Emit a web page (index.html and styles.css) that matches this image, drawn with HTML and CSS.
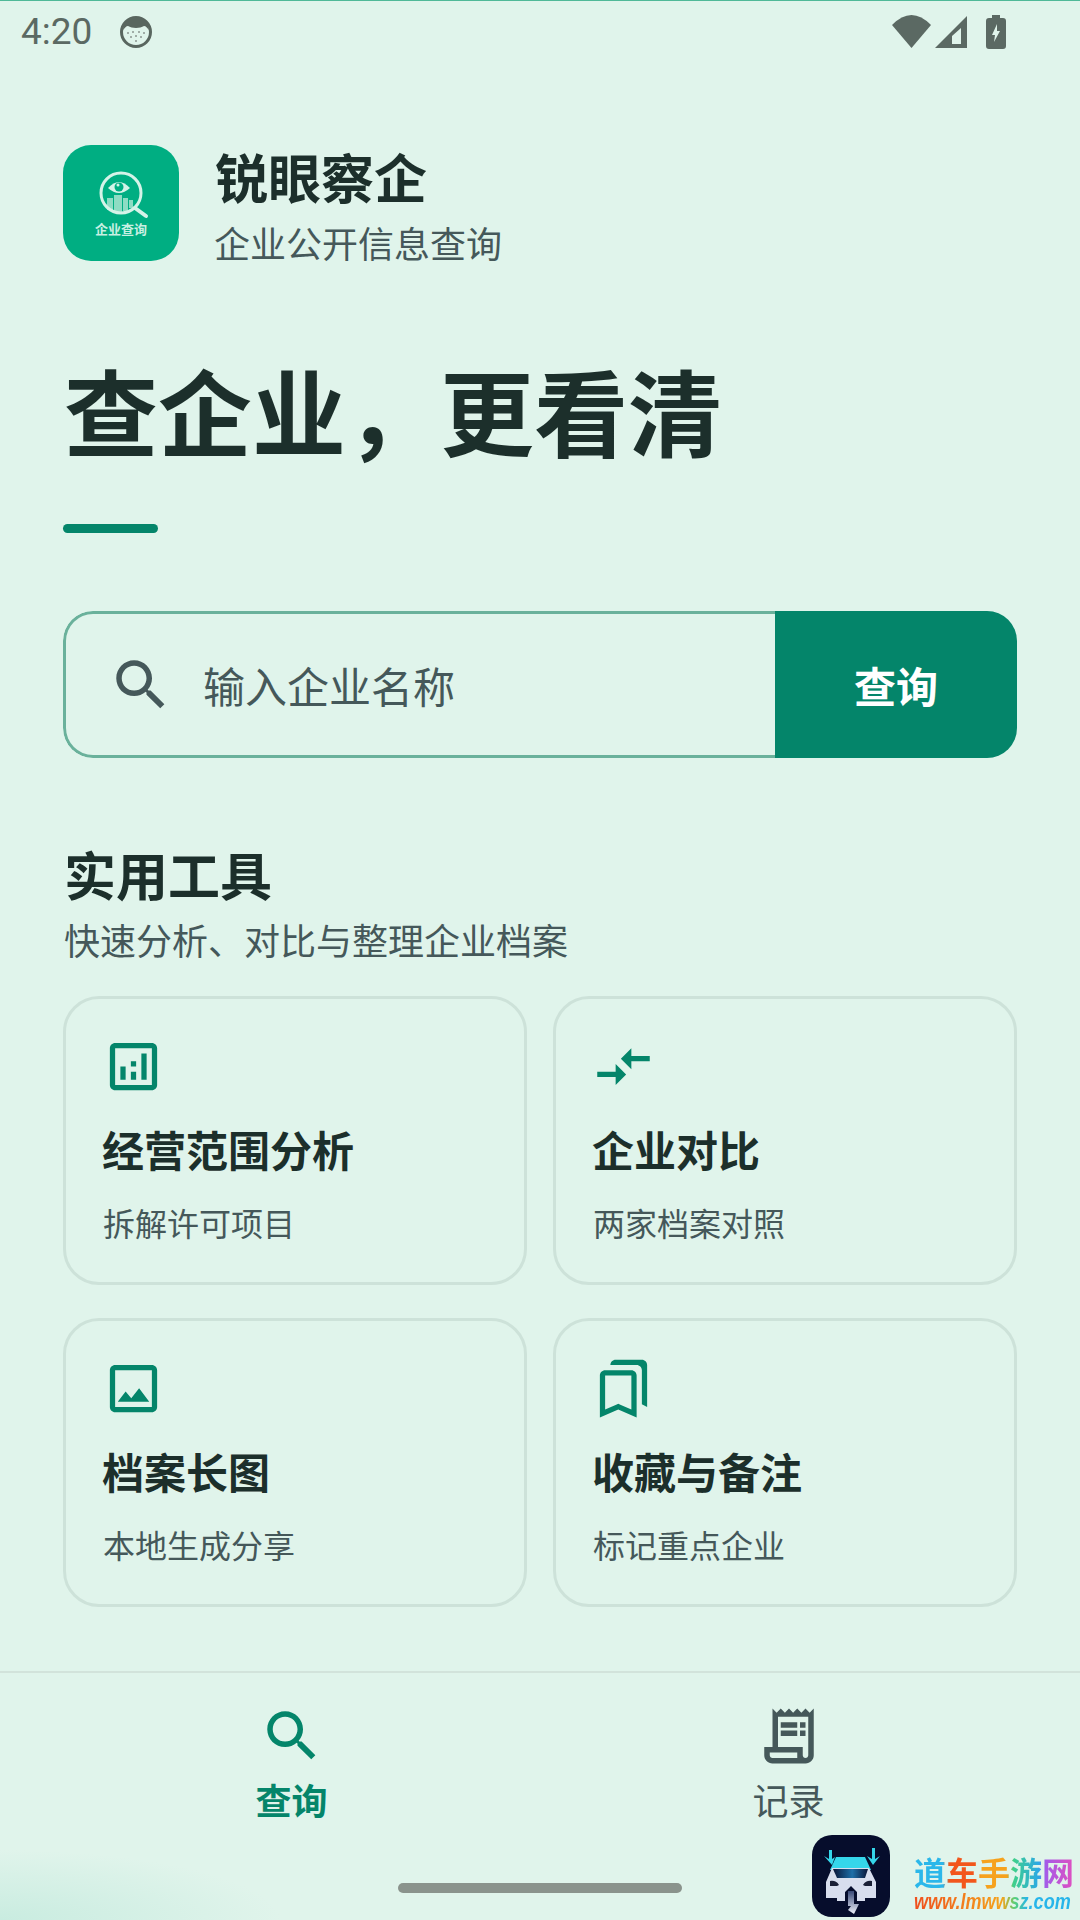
FILE: index.html
```html
<!DOCTYPE html>
<html lang="zh-CN">
<head>
    <meta charset="UTF-8">
    <meta name="viewport" content="width=device-width, initial-scale=1.0">
    <title>锐眼察企</title>
    <link rel="stylesheet" href="styles.css">
</head>
<body>
    <div class="status-bar">
        <span class="status-time">4:20</span>
        <svg class="status-face" viewBox="0 0 32 32">
            <circle cx="16" cy="16" r="14.500" fill="#e0f4eb" stroke="#59665f" stroke-width="3"/>
            <path d="M3 14C3 6 9 1 16 1s13 5 13 13c-2-2-3-4-5-4-2 1-5 2-8 2s-6-1-8-2c-2 0-3 2-5 4z" fill="#59665f"/>
            <g fill="#8b9690">
                <circle cx="8" cy="17" r="1"/><circle cx="13" cy="16" r="1"/><circle cx="19" cy="16" r="1"/><circle cx="24" cy="17" r="1"/>
                <circle cx="11" cy="21" r="1"/><circle cx="16" cy="20" r="1"/><circle cx="21" cy="21" r="1"/><circle cx="16" cy="25" r="1"/>
            </g>
        </svg>
        <div class="status-right">
            <svg class="status-wifi" viewBox="0 0 39 33"><path d="M0 10Q19.500-10 39 10L19.500 33z"/></svg>
            <svg class="status-signal" viewBox="0 0 32 32">
                <path d="M0 32 32 0v32z"/>
                <path d="M17 20 26 12V28H17z" fill="#e0f4eb"/>
            </svg>
            <svg class="status-battery" viewBox="0 0 20 34">
                <path d="M6 0h8v3h3a3 3 0 0 1 3 3v25a3 3 0 0 1-3 3H3a3 3 0 0 1-3-3V6a3 3 0 0 1 3-3h3z"/>
                <path d="M11 9 6 20h3l-1 7 6-11h-3z" fill="#e0f4eb"/>
            </svg>
        </div>
    </div>

    <main class="content">
        <div class="brand">
            <div class="brand-logo">
                <svg class="brand-mark" viewBox="0 0 56 56">
                    <path d="M14 41V29h6v12zM21 43V26h8v17zM30 42V29h5v13zM36 39V31h4v8z" fill="#8edcc3"/>
                    <path d="M15 19Q26 7 37 19 26 29 15 19z" fill="#d5f3e8"/>
                    <circle cx="26" cy="18" r="4.500" fill="#00ae82"/>
                    <circle cx="25" cy="16" r="1.500" fill="#d5f3e8"/>
                    <circle cx="28" cy="24" r="20" fill="none" stroke="#d5f3e8" stroke-width="3"/>
                    <path d="M42 39 53 47" stroke="#d5f3e8" stroke-width="4" stroke-linecap="round"/>
                </svg>
                <span class="brand-mark-text">企业查询</span>
            </div>
            <div class="brand-text">
                <div class="brand-name">锐眼察企</div>
                <div class="brand-sub">企业公开信息查询</div>
            </div>
        </div>

        <h1 class="hero">查企业，更看清</h1>
        <div class="hero-bar"></div>

        <div class="search">
            <div class="search-field">
                <svg class="search-icon" viewBox="0 0 24 24"><path d="M15.500 14h-.79l-.28-.27C15.410 12.590 16 11.110 16 9.500 16 5.910 13.090 3 9.500 3S3 5.910 3 9.500 5.910 16 9.500 16c1.610 0 3.090-.59 4.230-1.570l.27.28v.79l5 4.990L20.490 19l-4.990-5zm-6 0C7.010 14 5 11.990 5 9.500S7.010 5 9.500 5 14 7.010 14 9.500 11.990 14 9.500 14z"/></svg>
                <span class="search-placeholder">输入企业名称</span>
            </div>
            <div class="search-btn">查询</div>
        </div>

        <h2 class="section-title">实用工具</h2>
        <p class="section-sub">快速分析、对比与整理企业档案</p>

        <div class="tools">
            <div class="tool-card">
                <svg class="tool-icon" viewBox="0 0 24 24"><path d="M19 3H5c-1.100 0-2 .9-2 2v14c0 1.100.9 2 2 2h14c1.100 0 2-.9 2-2V5c0-1.100-.9-2-2-2zm0 16H5V5h14v14zM7 12h2v5H7zm8-5h2v10h-2zm-4 7h2v3h-2zm0-4h2v2h-2z"/></svg>
                <div class="tool-title">经营范围分析</div>
                <div class="tool-desc">拆解许可项目</div>
            </div>
            <div class="tool-card">
                <svg class="tool-icon" viewBox="0 0 24 24"><path d="M9.010 14H2v2h7.010v3L13 15l-3.990-4v3zm5.980-1v-3H22V8h-7.010V5L11 9l3.990 4z"/></svg>
                <div class="tool-title">企业对比</div>
                <div class="tool-desc">两家档案对照</div>
            </div>
            <div class="tool-card">
                <svg class="tool-icon" viewBox="0 0 24 24"><path d="M19 5v14H5V5h14m0-2H5c-1.100 0-2 .9-2 2v14c0 1.100.9 2 2 2h14c1.100 0 2-.9 2-2V5c0-1.100-.9-2-2-2zm-4.860 8.860-3 3.870L9 13.140 6 17h12l-3.860-5.140z"/></svg>
                <div class="tool-title">档案长图</div>
                <div class="tool-desc">本地生成分享</div>
            </div>
            <div class="tool-card">
                <svg class="tool-icon" viewBox="0 0 24 24"><path d="M15 7v12.970l-4.210-1.810-.79-.34-.79.34L5 19.970V7h10m4-6H8.990C7.890 1 7 1.900 7 3h10c1.100 0 2 .9 2 2v13l2 1V3c0-1.100-.9-2-2-2zm-4 4H5c-1.100 0-2 .9-2 2v16l7-3 7 3V7c0-1.100-.9-2-2-2z"/></svg>
                <div class="tool-title">收藏与备注</div>
                <div class="tool-desc">标记重点企业</div>
            </div>
        </div>
    </main>

    <footer class="tab-bar">
        <div class="tabs">
            <div class="tab tab-active">
                <svg class="tab-icon" viewBox="0 0 24 24"><path d="M15.500 14h-.79l-.28-.27C15.410 12.590 16 11.110 16 9.500 16 5.910 13.090 3 9.500 3S3 5.910 3 9.500 5.910 16 9.500 16c1.610 0 3.090-.59 4.230-1.570l.27.28v.79l5 4.990L20.490 19l-4.990-5zm-6 0C7.010 14 5 11.990 5 9.500S7.010 5 9.500 5 14 7.010 14 9.500 11.990 14 9.500 14z"/></svg>
                <span class="tab-label">查询</span>
            </div>
            <div class="tab">
                <svg class="tab-icon" viewBox="0 0 24 24"><path d="M19.500 3.500 18 2l-1.500 1.500L15 2l-1.500 1.500L12 2l-1.500 1.500L9 2 7.500 3.500 6 2v14H3v3c0 1.660 1.340 3 3 3h12c1.660 0 3-1.340 3-3V2l-1.500 1.500zM15 20H6c-.55 0-1-.45-1-1v-1h10v2zm4-1c0 .55-.45 1-1 1s-1-.45-1-1v-3H8V5h11v14z"/><path d="M9 7h6v2H9zM16 7h2v2h-2zM9 10h6v2H9zM16 10h2v2h-2z"/></svg>
                <span class="tab-label">记录</span>
            </div>
        </div>
        <div class="home-bar"></div>
    </footer>

    <div class="watermark">
        <svg class="wm-logo" viewBox="0 0 78 82">
            <defs>
                <linearGradient id="wm-glass" x1="0" x2="1" y1="0" y2="0">
                    <stop offset="0" stop-color="#0a1538"/>
                    <stop offset="0.55" stop-color="#1d6fa8"/>
                    <stop offset="1" stop-color="#0a1538"/>
                </linearGradient>
                <linearGradient id="wm-arrow" x1="0" x2="0" y1="0" y2="1">
                    <stop offset="0" stop-color="#3a4a78"/>
                    <stop offset="1" stop-color="#eef1fa"/>
                </linearGradient>
            </defs>
            <rect width="78" height="82" rx="20" fill="#060d2c"/>
            <path d="M17 15h3v9l3-2-3 8-8-9 5 3zM60 13h3v11l5-3-7 9-6-9 5 3z" fill="#35d6ea"/>
            <path d="M24 22h29l6 13H18z" fill="#35d6ea"/>
            <path d="M20 33h37l7 14v16H53v3h-8v-9l-6-6-6 6v9h-8v-3H14V47z" fill="#d8deee"/>
            <path d="M21 34h35l-3 9H25z" fill="url(#wm-glass)"/>
            <path d="M18 46q6-1 9 4l-2 1h-7zM60 46q-6-1-9 4l2 1h7z" fill="#1a2036"/>
            <path d="M36 56h6v13h5l-5 10-6-4 3-4h-3z" fill="url(#wm-arrow)"/>
        </svg>
        <div class="wm-text">
            <div class="wm-name">道车手游网</div>
            <div class="wm-url">www.lmwwsz.com</div>
        </div>
    </div>
</body>
</html>
```

FILE: styles.css
```css
* {
    box-sizing: border-box;
}
body {
    position: relative;
    display: flex;
    flex-direction: column;
    width: 1080px;
    height: 1920px;
    margin: 0;
    overflow: hidden;
    font-family: "Noto Sans CJK SC", "Noto Sans", sans-serif;
    color: #1c2f2b;
    background: radial-gradient(ellipse 280px 70px at 0 1920px, #c9ece0, rgba(201,236,224,0)), #e0f4eb;
}

/* status bar */
.status-bar {
    display: flex;
    align-items: center;
    height: 62px;
    padding: 0 74px 0 21px;
    border-top: 1px solid #4fb998;
    color: #5b6963;
}
.status-time {
    font-family: Roboto, sans-serif;
    font-size: 37px;
}
.status-face {
    width: 32px;
    height: 32px;
    margin-left: 28px;
}
.status-right {
    display: flex;
    align-items: center;
    margin-left: auto;
    fill: #5b6963;
}
.status-wifi { width: 39px; height: 33px; }
.status-signal { width: 32px; height: 32px; margin-left: 4px; }
.status-battery { width: 20px; height: 34px; margin-left: 19px; }

.content {
    flex: 1;
    padding: 83px 63px 0;
}

/* brand */
.brand {
    display: flex;
    align-items: flex-start;
    height: 116px;
}
.brand-logo {
    display: flex;
    flex-direction: column;
    align-items: center;
    width: 116px;
    height: 116px;
    padding-top: 24px;
    border-radius: 28px;
    background: #00ae82;
}
.brand-mark {
    width: 56px;
    height: 56px;
}
.brand-mark-text {
    margin-top: -5px;
    font-size: 13px;
    line-height: 18px;
    font-weight: 700;
    color: #c9f0e3;
}
.brand-text {
    margin: -2px 0 0 36px;
}
.brand-name {
    font-size: 53px;
    line-height: 66px;
    font-weight: 700;
}
.brand-sub {
    margin: 9px 0 0 -1px;
    font-size: 36px;
    line-height: 48px;
    color: #45585a;
}

.hero {
    margin: 91px 0 0 1px;
    font-size: 94px;
    line-height: 114px;
    font-weight: 700;
}
.hero-bar {
    width: 95px;
    height: 9px;
    margin-top: 58px;
    border-radius: 5px;
    background: #04856a;
}

/* search */
.search {
    display: flex;
    height: 147px;
    margin-top: 78px;
    border-radius: 30px;
    overflow: hidden;
}
.search-field {
    flex: 1;
    display: flex;
    align-items: center;
    padding-left: 42px;
    border: 3px solid #6ab19b;
    border-right: none;
    border-radius: 30px 0 0 30px;
}
.search-icon {
    width: 66px;
    height: 66px;
    fill: #45585a;
}
.search-placeholder {
    margin-left: 29px;
    font-size: 42px;
    color: #45585a;
}
.search-btn {
    display: flex;
    align-items: center;
    justify-content: center;
    width: 242px;
    font-size: 42px;
    font-weight: 700;
    color: #fff;
    background: #04856a;
}

/* tools */
.section-title {
    margin: 84px 0 0 1px;
    font-size: 52px;
    line-height: 64px;
    font-weight: 700;
}
.section-sub {
    margin: 10px 0 0 1px;
    font-size: 36px;
    line-height: 46px;
    color: #45585a;
}
.tools {
    display: grid;
    grid-template-columns: 1fr 1fr;
    gap: 33px 26px;
    margin-top: 34px;
}
.tool-card {
    height: 289px;
    padding: 36px 35px 0 36px;
    border: 3px solid #cde2d9;
    border-radius: 36px;
}
.tool-icon {
    display: block;
    width: 63px;
    height: 63px;
    fill: #04856a;
}
.tool-title {
    margin-top: 23px;
    font-size: 42px;
    line-height: 56px;
    font-weight: 700;
}
.tool-desc {
    margin: 25px 0 0 1px;
    font-size: 32px;
    line-height: 40px;
    color: #45585a;
}

/* bottom tabs */
.tab-bar {
    height: 249px;
    padding-top: 30px;
    border-top: 2px solid #d2e3db;
}
.tabs {
    display: flex;
    padding: 0 43px;
}
.tab {
    flex: 1;
    display: flex;
    flex-direction: column;
    align-items: center;
    color: #45585a;
    fill: #45585a;
}
.tab-active {
    color: #04856a;
    fill: #04856a;
    font-weight: 700;
}
.tab-icon {
    width: 66px;
    height: 66px;
}
.tab-label {
    margin-top: 7px;
    font-size: 36px;
    line-height: 46px;
}
.home-bar {
    width: 284px;
    height: 10px;
    margin: 61px auto 0;
    border-radius: 5px;
    background: #8a938c;
}

/* site watermark over the corner */
.watermark {
    position: absolute;
    left: 812px;
    top: 1835px;
    display: flex;
    align-items: flex-start;
}
.wm-logo {
    width: 78px;
    height: 82px;
}
.wm-text {
    width: 160px;
    margin: 18px 0 0 24px;
}
.wm-name {
    font-size: 32px;
    line-height: 36px;
    font-weight: 700;
    color: transparent;
    background: linear-gradient(90deg, #2bb7ea 18%, #f2561c 22%, #f2561c 38%, #f6a21d 42%, #f6a21d 58%, #3fd08a 62%, #2ba8e6 78%, #a45be8 82%, #e04fc0);
    -webkit-background-clip: text;
    background-clip: text;
}
.wm-url {
    width: 192px;
    font-family: "Liberation Sans", sans-serif;
    font-size: 22px;
    line-height: 26px;
    font-weight: 700;
    font-style: italic;
    color: transparent;
    background: linear-gradient(90deg, #ef4f1e, #f4a31c 56%, #56cf78 64%, #27b5ea 72%);
    -webkit-background-clip: text;
    background-clip: text;
    transform: scaleX(0.82);
    transform-origin: left center;
}
```
